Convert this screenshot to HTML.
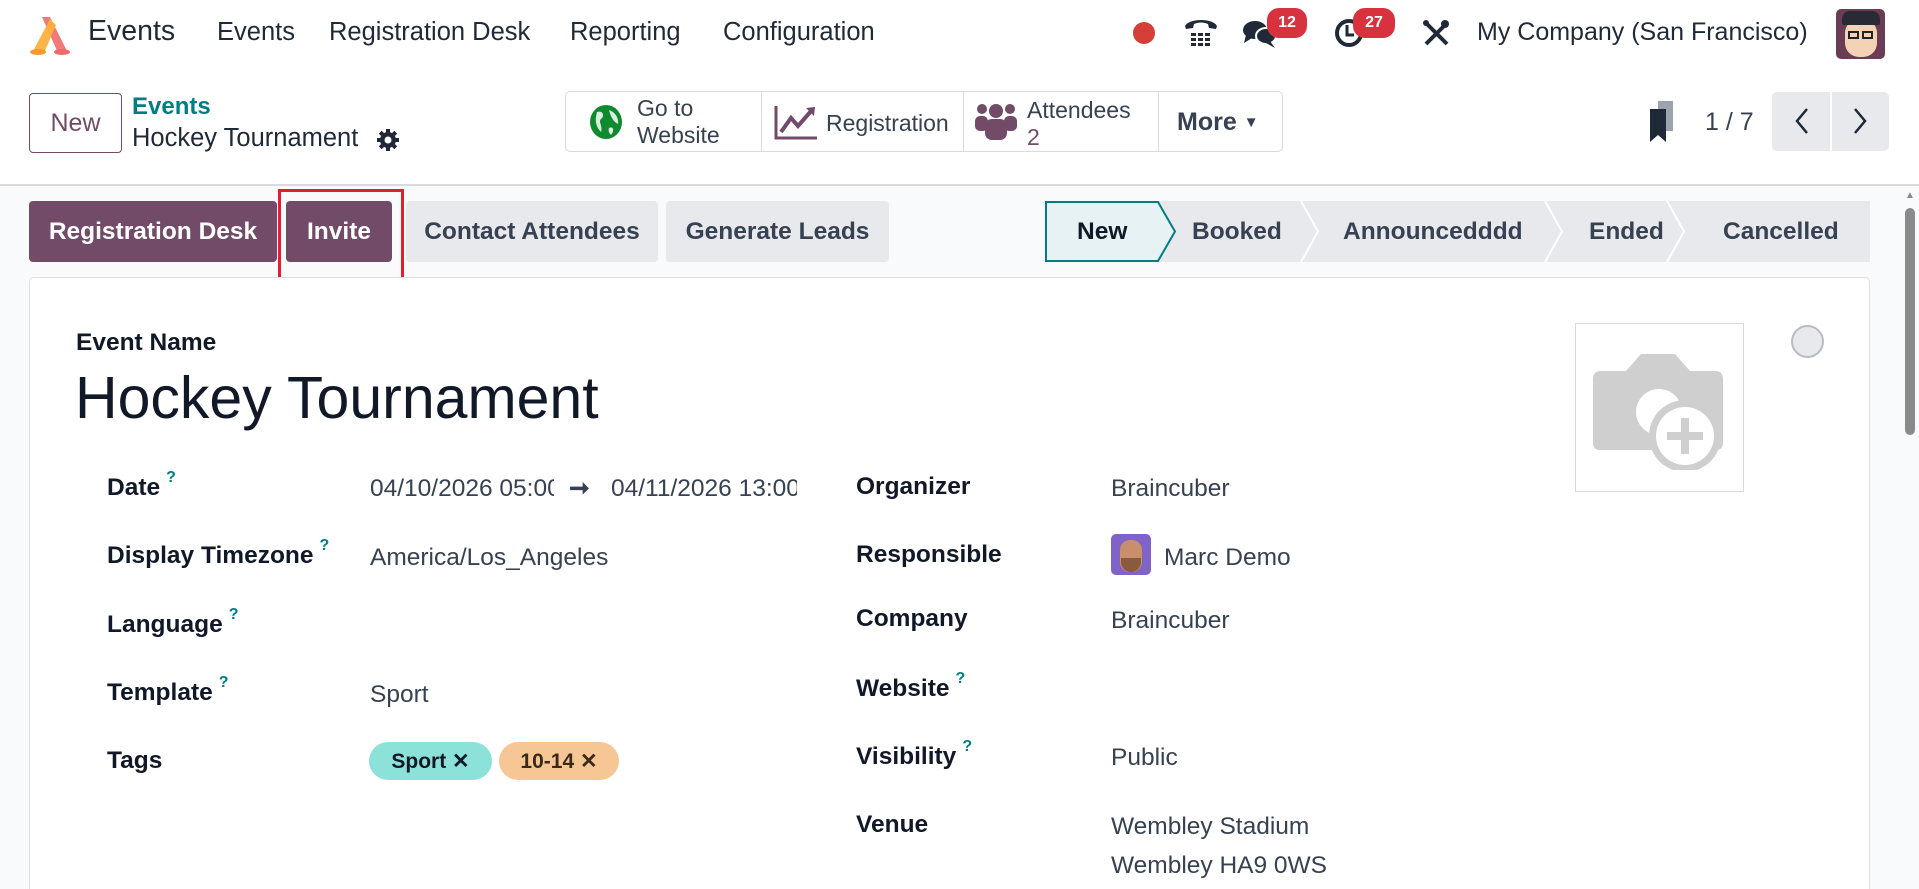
<!DOCTYPE html>
<html style="overflow:hidden;width:1919px;height:889px"><head><meta charset="utf-8">
<style>
*{box-sizing:border-box;margin:0;padding:0}
body{width:1919px;height:889px;overflow:hidden;background:#fff;font-family:"Liberation Sans",sans-serif;color:#374151;position:relative}
.a{position:absolute;white-space:nowrap}
.nav{font-size:25.5px;color:#1f2937;top:18px}
.btn{position:absolute;border-radius:4px;font-weight:bold;font-size:24.5px;display:flex;align-items:center;justify-content:center}
.lab{position:absolute;font-weight:bold;font-size:24.5px;color:#111827;white-space:nowrap}
.lab sup{color:#017e84;font-size:16px;font-weight:bold;margin-left:6px;position:relative;top:-4px}
.val{position:absolute;font-size:24.5px;color:#374151;white-space:nowrap}
.badge{position:absolute;background:#d9323f;color:#fff;font-size:16px;font-weight:bold;border-radius:12px;height:30px;display:flex;align-items:center;justify-content:center}
</style></head><body>

<!-- top nav -->
<svg class="a" style="left:24px;top:15px" width="50" height="40" viewBox="0 0 50 40">
<path d="M18 2 L34 38 L44 38 L26 2Z" fill="#f06a6a" opacity=".9"/>
<path d="M26 4 L8 38 L20 38 L32 10Z" fill="#fbb13c" opacity=".95"/>
<ellipse cx="14" cy="37" rx="8" ry="3" fill="#f79a2e"/>
<ellipse cx="38" cy="37" rx="8" ry="3" fill="#f06a6a"/>
</svg>
<div class="a" style="left:88px;top:15px;font-size:28.5px;color:#1f2937">Events</div>
<div class="a nav" style="left:217px">Events</div>
<div class="a nav" style="left:329px">Registration Desk</div>
<div class="a nav" style="left:570px">Reporting</div>
<div class="a nav" style="left:723px">Configuration</div>

<div class="a" style="left:1133px;top:22px;width:22px;height:22px;border-radius:50%;background:#d63e38"></div>
<svg class="a" style="left:1183px;top:16px" width="36" height="32" viewBox="0 0 36 32">
<path d="M2 10 C6 2 30 2 34 10 L33 13 L26 12 L25 8 C20 6 16 6 11 8 L10 12 L3 13Z" fill="#1f2937"/>
<g fill="#1f2937"><rect x="8" y="17" width="5" height="3"/><rect x="15" y="17" width="5" height="3"/><rect x="22" y="17" width="5" height="3"/><rect x="8" y="22" width="5" height="3"/><rect x="15" y="22" width="5" height="3"/><rect x="22" y="22" width="5" height="3"/><rect x="8" y="27" width="5" height="3"/><rect x="15" y="27" width="5" height="3"/><rect x="22" y="27" width="5" height="3"/></g>
</svg>
<svg class="a" style="left:1242px;top:19px" width="36" height="30" viewBox="0 0 36 30">
<ellipse cx="13" cy="11" rx="12" ry="9" fill="#1f2937"/><path d="M4 16 L2 24 L10 19Z" fill="#1f2937"/>
<ellipse cx="24" cy="17" rx="10" ry="8" fill="#1f2937" stroke="#fff" stroke-width="2"/><path d="M28 22 L33 29 L24 24Z" fill="#1f2937"/>
</svg>
<div class="badge" style="left:1267px;top:8px;width:40px">12</div>
<svg class="a" style="left:1334px;top:18px" width="30" height="30" viewBox="0 0 30 30"><circle cx="15" cy="15" r="12" fill="none" stroke="#1f2937" stroke-width="4"/><path d="M13 7 V17 H20" fill="none" stroke="#1f2937" stroke-width="3"/></svg>
<div class="badge" style="left:1353px;top:8px;width:42px">27</div>
<svg class="a" style="left:1421px;top:18px" width="30" height="30" viewBox="0 0 30 30"><path d="M4 4 L26 26" stroke="#1f2937" stroke-width="4"/><path d="M26 5 L5 26" stroke="#1f2937" stroke-width="4"/><circle cx="24" cy="6" r="4" fill="#1f2937"/><circle cx="5" cy="5" r="3" fill="#1f2937"/></svg>
<div class="a nav" style="left:1477px;font-size:25px">My Company (San Francisco)</div>
<div class="a" style="left:1836px;top:9px;width:49px;height:50px;border-radius:5px;background:#6b3d55;overflow:hidden">
<div style="position:absolute;left:9px;top:10px;width:32px;height:38px;border-radius:14px;background:#f3d2b5"></div>
<div style="position:absolute;left:6px;top:2px;width:38px;height:14px;border-radius:8px 8px 2px 2px;background:#2a2a35"></div>
<div style="position:absolute;left:12px;top:22px;width:11px;height:8px;border:2px solid #222"></div>
<div style="position:absolute;left:26px;top:22px;width:11px;height:8px;border:2px solid #222"></div>
</div>

<!-- control panel -->
<div class="btn" style="left:29px;top:93px;width:93px;height:60px;border:1px solid #714b67;color:#714b67;font-weight:normal;font-size:25px">New</div>
<div class="a" style="left:132px;top:93px;font-size:24px;font-weight:bold;color:#017e84">Events</div>
<div class="a" style="left:132px;top:124px;font-size:25.5px;color:#1f2937">Hockey Tournament</div>
<svg class="a" style="left:376px;top:128px" width="24" height="24" viewBox="0 0 24 24"><g fill="#1f2937"><circle cx="12" cy="12" r="8"/><rect x="10" y="1" width="4" height="22"/><rect x="1" y="10" width="22" height="4"/><rect x="10" y="1" width="4" height="22" transform="rotate(45 12 12)"/><rect x="10" y="1" width="4" height="22" transform="rotate(-45 12 12)"/></g><circle cx="12" cy="12" r="3.5" fill="#fff"/></svg>

<div class="a" style="left:565px;top:91px;width:718px;height:61px;border:1px solid #d8dadd;border-radius:5px"></div>
<div class="a" style="left:761px;top:91px;width:1px;height:61px;background:#d8dadd"></div>
<div class="a" style="left:963px;top:91px;width:1px;height:61px;background:#d8dadd"></div>
<div class="a" style="left:1158px;top:91px;width:1px;height:61px;background:#d8dadd"></div>
<svg class="a" style="left:589px;top:104px" width="34" height="36" viewBox="0 0 34 36"><ellipse cx="17" cy="18" rx="16" ry="17" fill="#0f8a2f"/><path d="M8 8 C14 6 16 12 12 15 C9 18 14 22 12 28 C8 24 5 18 8 8Z M20 6 C26 8 30 14 29 20 C25 18 22 14 20 6Z M20 24 C24 22 26 26 22 31 C20 29 19 27 20 24Z" fill="#fff" opacity=".85"/></svg>
<div class="a" style="left:637px;top:95px;font-size:23px;line-height:27px;color:#374151">Go to<br>Website</div>
<svg class="a" style="left:774px;top:104px" width="44" height="36" viewBox="0 0 44 36"><path d="M2 2 V34 H43" fill="none" stroke="#714b67" stroke-width="3"/><path d="M7 28 L17 14 L24 22 L38 6" fill="none" stroke="#714b67" stroke-width="4"/><path d="M32 4 L41 3 L40 12Z" fill="#714b67"/></svg>
<div class="a" style="left:826px;top:110px;font-size:23px;color:#374151">Registration</div>
<svg class="a" style="left:975px;top:101px" width="42" height="40" viewBox="0 0 42 40"><g fill="#714b67"><circle cx="7" cy="8" r="5"/><circle cx="35" cy="8" r="5"/><circle cx="21" cy="10" r="7"/><rect x="0" y="15" width="13" height="15" rx="5"/><rect x="29" y="15" width="13" height="15" rx="5"/><rect x="10" y="18" width="22" height="21" rx="7"/></g></svg>
<div class="a" style="left:1027px;top:97px;font-size:23px;line-height:27px;color:#374151">Attendees<br><span style="color:#714b67">2</span></div>
<div class="a" style="left:1177px;top:108px;font-size:25px;font-weight:bold;color:#374151">More <span style="font-size:15px;position:relative;top:-3px">▼</span></div>

<svg class="a" style="left:1648px;top:99px" width="28" height="44" viewBox="0 0 28 44"><rect x="10" y="2" width="15" height="30" fill="#9ca3af"/><path d="M2 10 H18 V43 L10 36 L2 43Z" fill="#1f2937"/></svg>
<div class="a" style="left:1705px;top:108px;font-size:25px;color:#374151">1 / 7</div>
<div class="a" style="left:1772px;top:92px;width:117px;height:59px;background:#e7e9ed;border-radius:5px"></div>
<div class="a" style="left:1830px;top:92px;width:2px;height:59px;background:#fff"></div>
<svg class="a" style="left:1792px;top:106px" width="20" height="30" viewBox="0 0 20 30"><path d="M15 3 L5 15 L15 27" fill="none" stroke="#1f2937" stroke-width="2.5"/></svg>
<svg class="a" style="left:1850px;top:106px" width="20" height="30" viewBox="0 0 20 30"><path d="M5 3 L15 15 L5 27" fill="none" stroke="#1f2937" stroke-width="2.5"/></svg>

<!-- content background -->
<div class="a" style="left:0;top:184px;width:1919px;height:705px;background:#f9fafb;border-top:2px solid #d8dadd"></div>

<div class="btn" style="left:29px;top:201px;width:248px;height:61px;background:#714b67;color:#fff">Registration Desk</div>
<div class="btn" style="left:286px;top:201px;width:106px;height:61px;background:#714b67;color:#fff">Invite</div>
<div class="a" style="left:278px;top:189px;width:126px;height:100px;border:3px solid #e0202a"></div>
<div class="btn" style="left:406px;top:201px;width:252px;height:61px;background:#e7e9ed;color:#374151">Contact Attendees</div>
<div class="btn" style="left:666px;top:201px;width:223px;height:61px;background:#e7e9ed;color:#374151">Generate Leads</div>

<!-- statusbar -->
<svg class="a" style="left:1045px;top:201px" width="826" height="61" viewBox="0 0 826 61">
<rect x="0" y="0" width="825" height="61" fill="#e7e9ed"/>
<path d="M1 1 H113 L130 30.5 L113 60 H1Z" fill="#e6f2f3" stroke="#017e84" stroke-width="2"/>
<path d="M256 0 L273 30.5 L256 61" fill="none" stroke="#fff" stroke-width="2"/>
<path d="M500 0 L517 30.5 L500 61" fill="none" stroke="#fff" stroke-width="2"/>
<path d="M622 0 L639 30.5 L622 61" fill="none" stroke="#fff" stroke-width="2"/>
</svg>
<div class="a" style="left:1077px;top:218px;font-size:24.5px;font-weight:bold;color:#111827">New</div>
<div class="a" style="left:1192px;top:218px;font-size:24.5px;font-weight:bold;color:#374151">Booked</div>
<div class="a" style="left:1343px;top:218px;font-size:24.5px;font-weight:bold;color:#374151">Announcedddd</div>
<div class="a" style="left:1589px;top:218px;font-size:24.5px;font-weight:bold;color:#374151">Ended</div>
<div class="a" style="left:1723px;top:218px;font-size:24.5px;font-weight:bold;color:#374151">Cancelled</div>

<!-- card -->
<div class="a" style="left:29px;top:277px;width:1841px;height:640px;background:#fff;border:1px solid #dcdfe3;border-radius:5px"></div>
<div class="a" style="left:76px;top:329px;font-size:24.5px;font-weight:bold;color:#111827">Event Name</div>
<div class="a" style="left:75px;top:364px;font-size:59px;color:#111827">Hockey Tournament</div>

<div class="lab" style="left:107px;top:473px">Date<sup>?</sup></div>
<div class="val" style="left:370px;top:475px;width:184px;overflow:hidden">04/10/2026 05:00</div>
<div class="val" style="left:569px;top:473px;font-weight:bold">➞</div>
<div class="val" style="left:611px;top:475px;width:186px;overflow:hidden">04/11/2026 13:00</div>
<div class="lab" style="left:107px;top:541px">Display Timezone<sup>?</sup></div>
<div class="val" style="left:370px;top:544px">America/Los_Angeles</div>
<div class="lab" style="left:107px;top:610px">Language<sup>?</sup></div>
<div class="lab" style="left:107px;top:678px">Template<sup>?</sup></div>
<div class="val" style="left:370px;top:681px">Sport</div>
<div class="lab" style="left:107px;top:747px">Tags</div>
<div class="a" style="left:369px;top:742px;width:123px;height:38px;border-radius:19px;background:#8ce2d9;font-size:21px;font-weight:bold;color:#111827;display:flex;align-items:center;justify-content:center">Sport&nbsp;✕</div>
<div class="a" style="left:499px;top:742px;width:120px;height:38px;border-radius:19px;background:#f6c795;font-size:21px;font-weight:bold;color:#3b2a18;display:flex;align-items:center;justify-content:center">10-14&nbsp;✕</div>

<div class="lab" style="left:856px;top:473px">Organizer</div>
<div class="val" style="left:1111px;top:475px">Braincuber</div>
<div class="lab" style="left:856px;top:541px">Responsible</div>
<div class="a" style="left:1111px;top:534px;height:41px;border-radius:5px;background:#7f63c9;overflow:hidden;width:40px"><div style="position:absolute;left:9px;top:6px;width:22px;height:32px;border-radius:10px;background:#c98e6c"></div><div style="position:absolute;left:10px;top:24px;width:20px;height:14px;border-radius:0 0 10px 10px;background:#8a5a3e"></div></div>
<div class="val" style="left:1164px;top:544px">Marc Demo</div>
<div class="lab" style="left:856px;top:605px">Company</div>
<div class="val" style="left:1111px;top:607px">Braincuber</div>
<div class="lab" style="left:856px;top:674px">Website<sup>?</sup></div>
<div class="lab" style="left:856px;top:742px">Visibility<sup>?</sup></div>
<div class="val" style="left:1111px;top:744px">Public</div>
<div class="lab" style="left:856px;top:811px">Venue</div>
<div class="val" style="left:1111px;top:813px">Wembley Stadium</div>
<div class="val" style="left:1111px;top:852px">Wembley HA9 0WS</div>

<div class="a" style="left:1575px;top:323px;width:169px;height:169px;border:1px solid #d8dadd;background:#fff"></div>
<svg class="a" style="left:1593px;top:354px" width="136" height="116" viewBox="0 0 136 116">
<path d="M48 0 H82 L97 17 H122 C128 17 130 20 130 26 V88 C130 94 128 96 122 96 H8 C2 96 0 94 0 88 V26 C0 20 2 17 8 17 H33Z" fill="#cfcfcf"/>
<circle cx="66" cy="58" r="23" fill="#fff"/>
<circle cx="92" cy="82" r="36" fill="#cfcfcf"/>
<circle cx="92" cy="82" r="29" fill="#fff"/>
<rect x="74" y="78" width="36" height="8" fill="#cfcfcf"/><rect x="88" y="64" width="8" height="36" fill="#cfcfcf"/>
</svg>
<div class="a" style="left:1791px;top:325px;width:33px;height:33px;border-radius:50%;background:#e7e9ed;border:2px solid #b8bcc2"></div>

<!-- scrollbar -->
<div class="a" style="left:1901px;top:186px;width:18px;height:703px;background:#f9fafb"></div>
<div class="a" style="left:1905px;top:190px;font-size:10px;color:#888">▲</div>
<div class="a" style="left:1905px;top:208px;width:10px;height:227px;border-radius:5px;background:#8a8a8a"></div>
</body></html>
